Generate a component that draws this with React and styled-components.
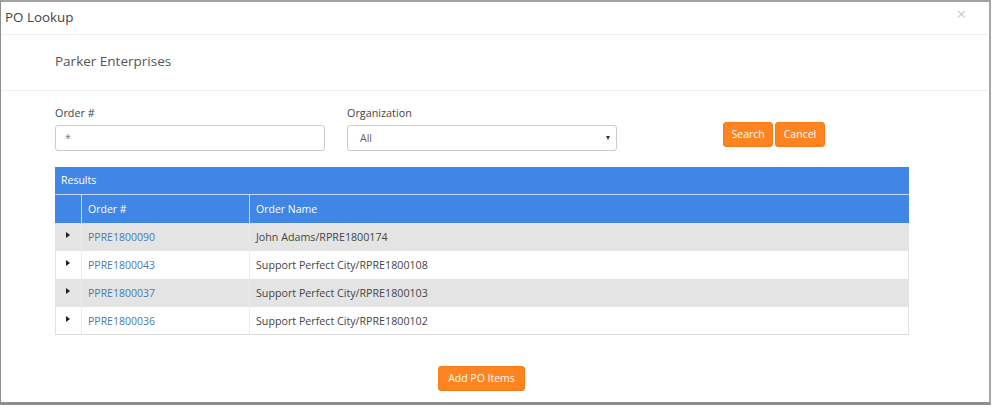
import styled, { createGlobalStyle } from "styled-components";

const orders = [
  { id: "PPRE1800090", name: "John Adams/RPRE1800174" },
  { id: "PPRE1800043", name: "Support Perfect City/RPRE1800108" },
  { id: "PPRE1800037", name: "Support Perfect City/RPRE1800103" },
  { id: "PPRE1800036", name: "Support Perfect City/RPRE1800102" },
];

const App = () => (
  <>
    <GlobalStyle />
    <Modal>
      <ModalHeader>
        <ModalTitle>PO Lookup</ModalTitle>
        <Close>×</Close>
      </ModalHeader>
      <CompanyBar>Parker Enterprises</CompanyBar>
      <Body>
        <SearchForm>
          <Field $width="270px" $margin="22px">
            <Label>Order #</Label>
            <TextInput defaultValue="*" />
          </Field>
          <Field $width="270px" $margin="106px">
            <Label>Organization</Label>
            <SelectBox>
              <span>All</span>
              <Caret />
            </SelectBox>
          </Field>
          <Button>Search</Button>
          <Button $margin="2px">Cancel</Button>
        </SearchForm>
        <Grid>
          <Caption>Results</Caption>
          <HeadRow>
            <HeadCell $width="27px" />
            <HeadCell $width="168px">Order #</HeadCell>
            <HeadCell>Order Name</HeadCell>
          </HeadRow>
          {orders.map((o, i) => (
            <Row key={o.id} $shaded={i % 2 === 0}>
              <Cell $width="26px">
                <Arrow />
              </Cell>
              <Cell $width="168px">
                <OrderLink href="#">{o.id}</OrderLink>
              </Cell>
              <NameCell>{o.name}</NameCell>
            </Row>
          ))}
        </Grid>
        <Footer>
          <Button $tall>Add PO Items</Button>
        </Footer>
      </Body>
    </Modal>
  </>
);

export default App;

const GlobalStyle = createGlobalStyle`
  html, body {
    margin: 0;
    background: #fff;
  }
  * {
    box-sizing: border-box;
  }
  body {
    font-family: "Open Sans", "Noto Sans", sans-serif;
    font-size: 10.5px;
    color: #444;
  }
`;

const Modal = styled.div`
  width: 991px;
  height: 405px;
  background: #fff;
  border: 1px solid #8f8f8f;
  border-top: 2px solid #a3a3a3;
  border-bottom: 3px solid #8e8e8e;
  border-right: 2px solid #a6a6a6;
  overflow: hidden;
`;

const ModalHeader = styled.div`
  height: 33px;
  padding: 0 0 0 4px;
  display: flex;
  justify-content: space-between;
  align-items: center;
  border-bottom: 1px solid #f0f0f0;
`;

const ModalTitle = styled.h4`
  margin: -2px 0 0;
  font-size: 13.4px;
  font-weight: 400;
  color: #444;
  line-height: 30px;
`;

const Close = styled.span`
  font-size: 16px;
  color: #c9c9c9;
  margin: -9px 23px 0 0;
  line-height: 16px;
`;

const CompanyBar = styled.div`
  height: 56px;
  padding: 0 0 4px 54px;
  display: flex;
  align-items: center;
  font-size: 13.5px;
  color: #555;
  border-bottom: 1px solid #f0f0f0;
`;

const Body = styled.div`
  padding: 14px 81px 0 54px;
`;

const SearchForm = styled.div`
  display: flex;
  align-items: flex-start;
`;

const Field = styled.div`
  width: ${(p) => p.$width};
  margin-right: ${(p) => p.$margin};
`;

const Label = styled.div`
  font-size: 10.8px;
  font-weight: 500;
  color: #444;
  line-height: 16px;
  margin-bottom: 4px;
`;

const TextInput = styled.input`
  display: block;
  width: 100%;
  height: 26px;
  padding: 0 9px;
  border: 1px solid #ccc;
  border-radius: 3px;
  font: inherit;
  color: #777;
  outline: none;
`;

const SelectBox = styled.div`
  height: 26px;
  padding: 0 6px 0 12px;
  display: flex;
  align-items: center;
  justify-content: space-between;
  border: 1px solid #ccc;
  border-radius: 3px;
  color: #666;
`;

const Caret = styled.i`
  width: 0;
  height: 0;
  border-left: 2.5px solid transparent;
  border-right: 2.5px solid transparent;
  border-top: 4px solid #333;
`;

const Button = styled.button`
  height: 25px;
  margin-top: ${(p) => (p.$tall ? "0" : "17px")};
  margin-left: ${(p) => p.$margin || "0"};
  padding: 0 ${(p) => (p.$tall ? "9px" : "7.5px")} 2px;
  background: #fd8420;
  border: 1px solid #f57c18;
  border-radius: 3px;
  color: #fff;
  font: inherit;
`;

const Grid = styled.div`
  width: 854px;
  margin-top: 16px;
  border-bottom: 1px solid #ddd;
`;

const Caption = styled.div`
  height: 28px;
  padding: 0 0 2px 6px;
  display: flex;
  align-items: center;
  background: #3f86e6;
  color: #fff;
  border-bottom: 1px solid #c4d8f3;
`;

const HeadRow = styled.div`
  display: flex;
  height: 28px;
  background: #3f86e6;
  color: #fff;
`;

const HeadCell = styled.div`
  flex: ${(p) => (p.$width ? `0 0 ${p.$width}` : "1")};
  padding-left: 6px;
  display: flex;
  align-items: center;
  border-right: 1px solid #c4d8f3;

  &:last-child {
    border-right: none;
  }
`;

const Row = styled.div`
  display: flex;
  height: 28px;
  background: ${(p) => (p.$shaded ? "#e4e4e4" : "#fff")};
  border-right: 1px solid #e2e2e2;
  border-left: 1px solid ${(p) => (p.$shaded ? "#e4e4e4" : "#e2e2e2")};

  &:last-child {
    height: 27px;
  }
`;

const Cell = styled.div`
  flex: ${(p) => (p.$width ? `0 0 ${p.$width}` : "1")};
  padding-left: 6px;
  display: flex;
  align-items: center;
  border-right: 1px solid #ebebeb;
  color: #444;
`;

const NameCell = styled(Cell)`
  border-right: none;
  font-size: 10.7px;
`;

const OrderLink = styled.a`
  color: #4b7bab;
  text-decoration: none;
`;

const Arrow = styled.i`
  width: 0;
  height: 0;
  margin: -4px 0 0 4px;
  border-top: 3px solid transparent;
  border-bottom: 3px solid transparent;
  border-left: 4px solid #222;
`;

const Footer = styled.div`
  display: flex;
  justify-content: center;
  margin-top: 31px;
`;
